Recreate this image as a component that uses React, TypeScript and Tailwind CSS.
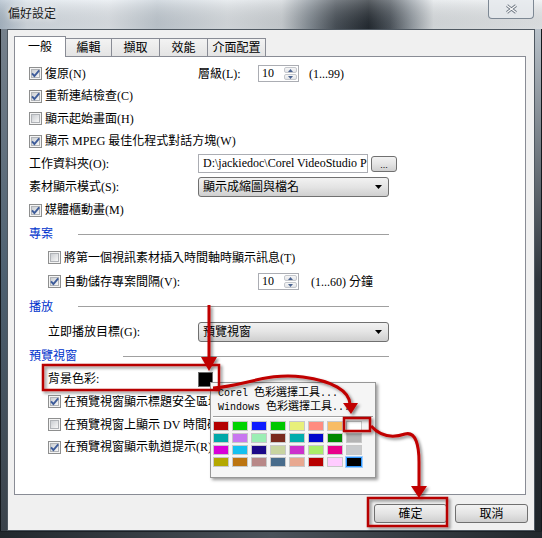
import React from 'react';

const Check: React.FC<{ on?: boolean }> = ({ on }) => (
  <span className="relative w-[13px] h-[13px] shrink-0 border border-[#8e8f8f] bg-[#f4f4f4] p-px">
    <span className="block w-full h-full border border-[#b0b3b7] bg-linear-to-br from-[#cbced2] to-[#f7f7f7]" />
    {on && (
      <svg className="absolute left-0 top-0" width="11" height="11" viewBox="0 0 11 11">
        <path d="M2 5.3 L4.4 8 L9.2 2.4" fill="none" stroke="#3e5c9a" strokeWidth="1.9" />
      </svg>
    )}
  </span>
);

const Spin: React.FC<{ v: string }> = ({ v }) => (
  <div className="w-[41px] h-[17px] border border-[#abadb3] bg-white flex">
    <span className="flex-1 pl-[3px] leading-[15px]">{v}</span>
    <div className="w-[15px] flex flex-col p-px gap-px">
      <div className="flex-1 rounded-[2px] border border-[#c4c7cc] bg-linear-to-b from-[#f6f6f6] to-[#e2e4e8] flex items-center justify-center">
        <svg width="5" height="3" viewBox="0 0 5 3"><path d="M0 3 H5 L2.5 0 Z" fill="#4a6391" /></svg>
      </div>
      <div className="flex-1 rounded-[2px] border border-[#c4c7cc] bg-linear-to-b from-[#f6f6f6] to-[#e2e4e8] flex items-center justify-center">
        <svg width="5" height="3" viewBox="0 0 5 3"><path d="M0 0 H5 L2.5 3 Z" fill="#4a6391" /></svg>
      </div>
    </div>
  </div>
);

const Combo: React.FC<{ text: string }> = ({ text }) => (
  <div className="w-[191px] h-[20px] rounded-[3px] border border-[#707070] bg-linear-to-b from-[#f2f2f2] via-[#e4e4e4] to-[#cfcfcf] flex items-center pl-[4px] pr-[6px]">
    <span className="flex-1">{text}</span>
    <svg width="7" height="4" viewBox="0 0 7 4"><path d="M0 0 H7 L3.5 4 Z" fill="#000" /></svg>
  </div>
);

const Section: React.FC<{ label: string; w: string; line: string }> = ({ label, w, line }) => (
  <div className="h-[24px] flex items-center pl-[14px]">
    <span className={w + ' text-[#0033cc]'}>{label}</span>
    <span className={line + ' h-px bg-[#a0a0a0]'} />
  </div>
);

const swatches = [
  '#b40000', '#00d400', '#0e1cff', '#00c800', '#e8f07a', '#ff8c80', '#f8bc64', '#ffffff',
  '#00a8a8', '#c878f0', '#9ceeb4', '#7a2a1e', '#00acac', '#0008cc', '#008800', '#b4b4b4',
  '#d800d8', '#14c0f0', '#1c0888', '#c8d4a0', '#cc30cc', '#aaee6a', '#e8008a', '#c8cacc',
  '#b4a800', '#bc7410', '#b88888', '#486c8c', '#e8a890', '#b80000', '#ffccff', '#000000',
];

const glass: [number, string][] = [
  [0, '#aebdcb'], [5, '#dbe3ea'], [20, '#e6ebf0'], [29, '#c7d0d8'], [42, '#e1e6ea'], [52, '#d2d7db'],
  [57, '#8b949c'], [62, '#4b535b'], [68, '#252c33'], [72, '#4f575f'], [76, '#9aa2a9'], [80, '#e2e6e9'], [100, '#edf0f2'],
];

export default function App() {
  return (
    <div className="relative w-[542px] h-[538px] overflow-hidden bg-[#30373e] font-['Liberation_Serif','Noto_Sans_CJK_TC',serif] text-[12px] text-black">
      {/* title bar */}
      <div className="relative h-[29px] flex items-start justify-between">
        <svg className="absolute left-0 top-0" width="542" height="29">
          <defs>
            <linearGradient id="glass" x1="0" y1="0" x2="1" y2="0">
              {glass.map(([o, c]) => (
                <stop key={o} offset={o + '%'} stopColor={c} />
              ))}
            </linearGradient>
            <linearGradient id="shine" x1="0" y1="0" x2="0" y2="1">
              <stop offset="0%" stopColor="#fff" stopOpacity="0.25" />
              <stop offset="100%" stopColor="#000" stopOpacity="0.08" />
            </linearGradient>
          </defs>
          <rect width="542" height="29" fill="url(#glass)" />
          <rect width="542" height="29" fill="url(#shine)" />
        </svg>
        <span className="relative pl-[8px] pt-[5px] text-[#1b1b1b] [text-shadow:0_0_6px_#fff]">偏好設定</span>
        <div className="relative mr-[8px] w-[46px] h-[19px] rounded-b-[4px] border border-t-0 border-[#7d8894] bg-[#e6eaeecc] flex items-center justify-center">
          <svg width="13" height="10" viewBox="0 0 13 10">
            <path d="M2 1.5 L11 8.5 M11 1.5 L2 8.5" stroke="#6b7580" strokeWidth="3" />
            <path d="M2 1.5 L11 8.5 M11 1.5 L2 8.5" stroke="#fafafa" strokeWidth="1.3" />
          </svg>
        </div>
      </div>

      <div className="flex">
        <div className="w-[7px] h-[502px] border-l border-[#15191d] bg-linear-to-b from-[#76818c] via-[#4d6070] to-[#3a424a]" />

        {/* client area */}
        <div className="w-[528px] h-[502px] border border-[#4f5861] bg-[#f0f0f0] flex flex-col pl-[6px]">
          {/* tabs */}
          <div className="mt-[6px] flex items-end h-[21px]">
            <div className="relative z-10 w-[52px] h-[21px] border border-b-0 border-[#898c95] bg-white flex items-center justify-center">一般</div>
            <div className="-ml-px w-[47px] h-[19px] border border-b-0 border-[#898c95] bg-linear-to-b from-[#f3f3f3] to-[#e3e3e3] flex items-center justify-center">編輯</div>
            <div className="-ml-px w-[49px] h-[19px] border border-b-0 border-[#898c95] bg-linear-to-b from-[#f3f3f3] to-[#e3e3e3] flex items-center justify-center">擷取</div>
            <div className="-ml-px w-[49px] h-[19px] border border-b-0 border-[#898c95] bg-linear-to-b from-[#f3f3f3] to-[#e3e3e3] flex items-center justify-center">效能</div>
            <div className="-ml-px w-[59px] h-[19px] border border-b-0 border-[#898c95] bg-linear-to-b from-[#f3f3f3] to-[#e3e3e3] flex items-center justify-center">介面配置</div>
          </div>

          {/* tab panel */}
          <div className="-mt-px w-[512px] h-[439px] border border-[#898c95] bg-white pt-[5px] flex flex-col">
            <div className="h-[23px] flex items-center pl-[14px]">
              <div className="w-[169px] flex items-center gap-[3px]"><Check on /><span>復原(N)</span></div>
              <span className="w-[60px]">層級(L):</span>
              <Spin v="10" />
              <span className="ml-[10px]">(1...99)</span>
            </div>
            <div className="h-[22px] flex items-center gap-[3px] pl-[14px]"><Check on /><span>重新連結檢查(C)</span></div>
            <div className="h-[23px] flex items-center gap-[3px] pl-[14px]"><Check /><span>顯示起始畫面(H)</span></div>
            <div className="h-[22px] flex items-center gap-[3px] pl-[14px]"><Check on /><span>顯示 MPEG 最佳化程式對話方塊(W)</span></div>
            <div className="h-[23px] flex items-center pl-[14px]">
              <span className="w-[169px]">工作資料夾(O):</span>
              <div className="w-[170px] h-[19px] border border-[#abadb3] bg-white pl-[4px] overflow-hidden whitespace-nowrap leading-[17px]">
                {'D:\\jackiedoc\\Corel VideoStudio Pro'}
              </div>
              <div className="ml-[3px] w-[26px] h-[16px] rounded-[3px] border border-[#707070] bg-linear-to-b from-[#f2f2f2] via-[#e4e4e4] to-[#cfcfcf] flex items-end justify-center text-[9px] leading-[11px] font-['Liberation_Sans',sans-serif]">
                ...
              </div>
            </div>
            <div className="h-[23px] flex items-center pl-[14px]">
              <span className="w-[169px]">素材顯示模式(S):</span>
              <Combo text="顯示成縮圖與檔名" />
            </div>
            <div className="h-[24px] flex items-center gap-[3px] pl-[14px]"><Check on /><span>媒體櫃動畫(M)</span></div>

            <Section label="專案" w="w-[49px]" line="w-[311px]" />
            <div className="h-[23px] flex items-center gap-[3px] pl-[33px]"><Check /><span>將第一個視訊素材插入時間軸時顯示訊息(T)</span></div>
            <div className="h-[25px] flex items-center pl-[33px]">
              <div className="w-[210px] flex items-center gap-[3px]"><Check on /><span>自動儲存專案間隔(V):</span></div>
              <Spin v="10" />
              <span className="ml-[12px]">(1...60) 分鐘</span>
            </div>

            <div className="h-[25px] flex items-center pl-[14px]">
              <span className="w-[49px] text-[#0033cc]">播放</span>
              <span className="w-[311px] h-px bg-[#a0a0a0]" />
            </div>
            <div className="h-[25px] flex items-center pl-[33px]">
              <span className="w-[150px]">立即播放目標(G):</span>
              <Combo text="預覽視窗" />
            </div>

            <Section label="預覽視窗" w="w-[94px]" line="w-[266px]" />
            <div className="h-[22px] flex items-center pl-[33px]">
              <span className="w-[150px]">背景色彩:</span>
              <span className="w-[15px] h-[15px] border border-[#6d6d6d] bg-black" />
            </div>
            <div className="h-[23px] flex items-center gap-[3px] pl-[33px]"><Check on /><span>在預覽視窗顯示標題安全區域(A)</span></div>
            <div className="h-[23px] flex items-center gap-[3px] pl-[33px]"><Check /><span>在預覽視窗上顯示 DV 時間碼(I)</span></div>
            <div className="h-[22px] flex items-center gap-[3px] pl-[33px]"><Check on /><span>在預覽視窗顯示軌道提示(R)</span></div>
          </div>

          {/* buttons */}
          <div className="mt-[9px] flex justify-end gap-[8px] pr-[6px]">
            <button className="w-[73px] h-[19px] rounded-[3px] border border-[#707070] bg-linear-to-b from-[#f2f2f2] via-[#e4e4e4] to-[#cfcfcf] leading-none">確定</button>
            <button className="w-[73px] h-[19px] rounded-[3px] border border-[#707070] bg-linear-to-b from-[#f2f2f2] via-[#e4e4e4] to-[#cfcfcf] leading-none">取消</button>
          </div>
        </div>

        <div className="w-[7px] h-[502px] border-r border-[#15191d] bg-linear-to-b from-[#b9c2ca] via-[#2f363d] to-[#1f252a]" />
      </div>
      <div className="h-[7px] border-t border-[#1b2025] bg-linear-to-r from-[#22282d] via-[#4a525a] to-[#22282d]" />

      {/* colour picker popup */}
      <div className="absolute left-[210px] top-[382px] w-[166px] h-[96px] border border-[#979797] bg-[#f5f5f5] shadow-[2px_2px_3px_rgba(0,0,0,0.4)] pt-[3px] font-['Liberation_Mono','Noto_Sans_CJK_TC',monospace] text-[10px] leading-[13px]">
        <div className="h-[14px] pl-[7px] flex items-center whitespace-nowrap">Corel <span className="text-[11px] leading-[13px] ml-[6px]">色彩選擇工具</span>...</div>
        <div className="h-[14px] pl-[7px] flex items-center whitespace-nowrap">Windows <span className="text-[11px] leading-[13px] ml-[6px]">色彩選擇工具</span>...</div>
        <div className="mt-[2px] mx-[2px] h-[2px] border-t border-[#a0a0a0] border-b border-b-white" />
        <div className="mt-[3px] ml-[2px] grid grid-cols-[repeat(8,16px)] gap-x-[3px] gap-y-[2px]">
          {swatches.map((c, i) => (
            <span
              key={i}
              className={i === 31 ? 'h-[10px] border border-[#3399ff] outline outline-1 outline-[#9fcfff]' : 'h-[10px] border border-[#c8c8c8]'}
              style={{ backgroundColor: c }}
            />
          ))}
        </div>
      </div>

      {/* red annotations */}
      <svg className="absolute left-0 top-0 pointer-events-none" width="542" height="538" viewBox="0 0 542 538">
        <defs>
          <filter id="sh" x="-10%" y="-10%" width="120%" height="120%">
            <feDropShadow dx="2" dy="2" stdDeviation="1.4" floodColor="#000" floodOpacity="0.45" />
          </filter>
        </defs>
        <g filter="url(#sh)">
          <g stroke="#c00000" fill="none" strokeWidth="3">
            <path d="M209 305 V359" />
            <path d="M213 388 C245 386 268 372 303 377 C333 381 349 391 350 404" />
            <path d="M371 426 C381 437 393 438 405 434 C416 431 419 446 419 462 V488" />
          </g>
          <g stroke="#b80000" fill="none" strokeWidth="2.5">
            <rect x="43" y="365" width="176" height="25" />
            <rect x="344" y="418" width="26" height="13" />
            <rect x="368" y="498" width="79" height="28" />
          </g>
          <g fill="#c00000">
            <path d="M201 357 H217 L209 371 Z" />
            <path d="M343 403 H358 L351 414 Z" />
            <path d="M411 486 H427 L419 498 Z" />
          </g>
        </g>
      </svg>
    </div>
  );
}
